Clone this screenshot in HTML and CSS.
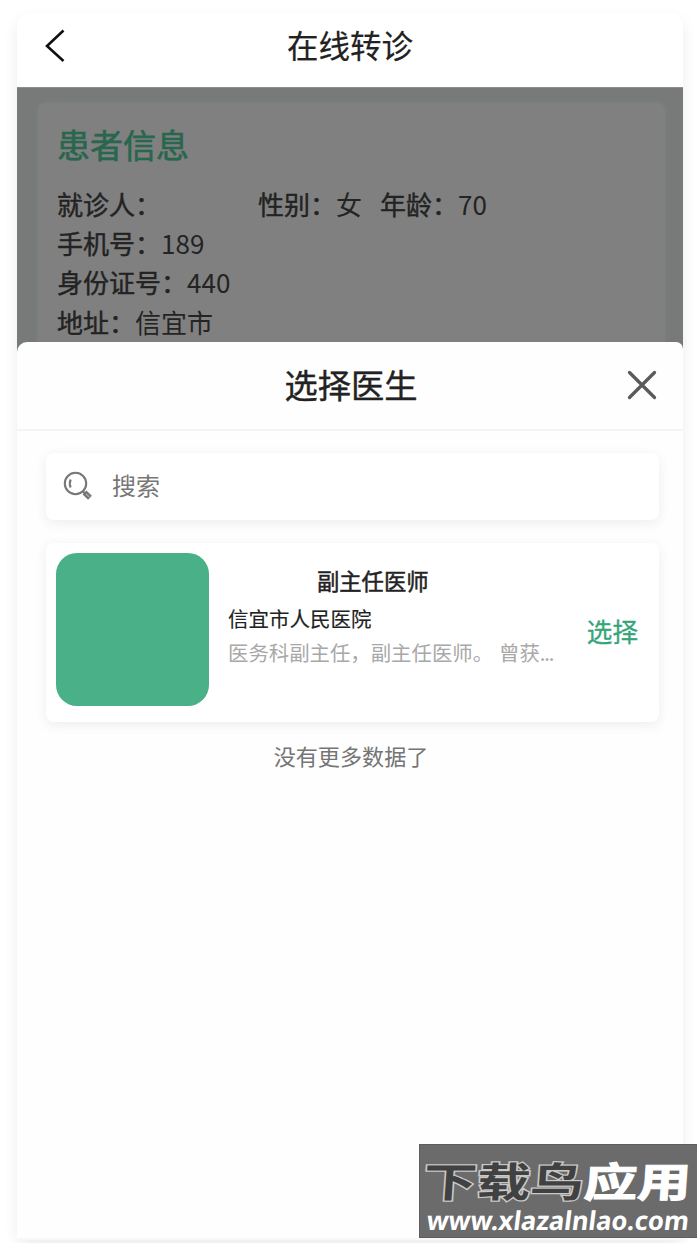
FILE: index.html
```html
<!DOCTYPE html>
<html lang="zh-CN">
<head>
<meta charset="utf-8">
<title>在线转诊</title>
<link rel="stylesheet" href="styles.css">
</head>
<body>
<div class="phone">
  <header class="navbar">
    <svg class="back" viewBox="0 0 22 34"><path d="M19.500 2.500 3 18 19.500 33"/></svg>
    <h1 class="nav-title">在线转诊</h1>
  </header>
  <section class="backdrop">
    <div class="patient">
      <h2 class="patient-title">患者信息</h2>
      <div class="row"><span class="name"><b>就诊人：</b></span><span class="gender"><b>性别：</b>女</span><span><b>年龄：</b>70</span></div>
      <div class="row"><b>手机号：</b>189</div>
      <div class="row"><b>身份证号：</b>440</div>
      <div class="row"><b>地址：</b>信宜市</div>
    </div>
  </section>
  <main class="sheet">
    <div class="sheet-head">
      <h2 class="sheet-title">选择医生</h2>
      <svg class="close" viewBox="0 0 30 30"><path d="M2.500 2.500 27.500 27.500M27.500 2.500 2.500 27.500"/></svg>
    </div>
    <div class="sheet-body">
      <div class="search">
        <svg class="lens" viewBox="0 0 30 30"><circle cx="12.500" cy="12.500" r="10.700"/><path d="M7.700 8.500Q5.800 12.500 7.700 16.500M20 20.500 22 22.500"/><path class="handle" d="M21.500 21.500 27 26.800"/><path class="handle-core" d="M23 23 26.300 26"/></svg>
        <span>搜索</span>
      </div>
      <article class="doctor">
        <div class="avatar"></div>
        <div class="info">
          <div class="rank">副主任医师</div>
          <div class="hospital">信宜市人民医院</div>
          <div class="desc"><span>医务科副主任，副主任医师。</span><span>曾获<span class="dots">...</span></span></div>
        </div>
        <div class="choose">选择</div>
      </article>
      <p class="nomore">没有更多数据了</p>
    </div>
  </main>
</div>
<aside class="watermark">
  <div class="brand"><span class="brand-dark">下载鸟</span><span class="brand-light">应用</span></div>
  <div class="site">www.xlazalnlao.com</div>
</aside>
</body>
</html>
```
FILE: styles.css
```css
* { box-sizing: border-box; }
body {
  margin: 0;
  height: 1243px;
  padding: 13px 17px 3px;
  overflow: hidden;
  background: #fff;
  font-family: "Noto Sans CJK SC", sans-serif;
  color: #222;
}
h1, h2, p { margin: 0; font-weight: 400; }
svg { display: block; fill: none; flex: none; }
.phone {
  width: 666px;
  height: 1227px;
  display: flex;
  flex-direction: column;
  border-radius: 14px;
  background: #fefefe;
  box-shadow: 0 6px 15px rgba(0, 0, 0, .08);
}
.navbar {
  height: 74px;
  display: grid;
  grid-template-columns: 60px 1fr 60px;
  align-items: center;
  padding-bottom: 8px;
  border-radius: 14px 14px 0 0;
  background: #fff;
}
.back { width: 22px; height: 34px; margin: -2px 0 0 27px; stroke: #111; stroke-width: 2.6; }
.nav-title { margin-top: -5px; font-size: 31.5px; line-height: 40px; text-align: center; -webkit-text-stroke: .2px #222; }
.backdrop {
  height: 269px;
  margin-bottom: -14px;
  padding: 15px 18px 0 21px;
  background: #777a79;
  border-top: 1px solid #8d8d8d;
}
.patient {
  height: 253px;
  padding: 18px 19px 0;
  border-radius: 8px 8px 0 0;
  background: #808080;
  box-shadow: 0 0 9px rgba(128, 132, 130, .6);
}
.patient-title { margin-bottom: 17px; font-size: 33px; line-height: 46px; color: #29664e; -webkit-text-stroke: .6px #29664e; }
.row { display: flex; font-size: 26px; line-height: 39.2px; color: #242424; }
.row b { font-weight: 400; -webkit-text-stroke: .4px #1c1c1c; }
.name { width: 201px; }
.gender { margin-right: 18px; }
.sheet {
  flex: 1;
  border-radius: 10px 7px 0 0;
  background: #fefefe;
  border-bottom: 2px solid #f8f8f8;
}
.sheet-head {
  height: 89px;
  display: grid;
  grid-template-columns: 74px 1fr 72px;
  align-items: center;
  border-bottom: 2px solid #f4f4f4;
}
.sheet-title { grid-column: 2; margin-top: -3px; font-size: 33.3px; line-height: 44px; text-align: center; -webkit-text-stroke: .4px #222; }
.close { width: 30px; height: 30px; margin: -2px 0 0 16px; stroke: #5a5a5a; stroke-width: 3.3; stroke-linecap: round; }
.sheet-body { padding: 22px 24px 0 29px; }
.search {
  height: 67px;
  display: flex;
  align-items: center;
  gap: 19px;
  padding: 0 0 3px 17px;
  border-radius: 8px;
  background: #fff;
  box-shadow: 0 3px 12px rgba(40, 70, 60, .09);
  font-size: 24px;
  line-height: 34px;
  color: #777;
}
.lens { width: 30px; height: 30px; margin-top: 2px; stroke: #777; stroke-width: 2.1; }
.lens .handle { stroke-width: 5.5; }
.lens .handle-core { stroke: #aaa; stroke-width: 1.2; }
.doctor {
  height: 179px;
  margin-top: 23px;
  display: flex;
  padding: 10px 21px 0 10px;
  border-radius: 8px;
  background: #fff;
  box-shadow: 0 3px 12px rgba(40, 70, 60, .09);
}
.avatar { width: 153px; height: 153px; border-radius: 21px; background: #49b087; }
.info { flex: 1; padding: 10px 0 0 19px; }
.rank { padding-left: 89px; font-size: 22.3px; line-height: 34px; -webkit-text-stroke: .5px #222; }
.hospital { margin-top: 4px; font-size: 20.5px; line-height: 34px; -webkit-text-stroke: .15px #222; }
.desc { display: flex; gap: 6px; font-size: 20.4px; line-height: 34px; color: #a8a8a8; white-space: nowrap; }
.dots { letter-spacing: -1.2px; }
.choose { padding-top: 60px; font-size: 25.6px; line-height: 36px; color: #35a579; -webkit-text-stroke: .3px #35a579; }
.nomore { margin-top: 16px; padding-right: 3px; font-size: 22.1px; line-height: 34px; text-align: center; color: #757575; }
.watermark {
  position: absolute;
  left: 419px;
  top: 1144px;
  width: 278px;
  height: 94px;
  background: #6b6b6b;
  border: 1px solid #5e5e5e;
  border-right: 0;
  color: #fff;
  white-space: nowrap;
  overflow: hidden;
}
.brand {
  display: flex;
  padding: 7px 0 0 4px;
  font-size: 53.5px;
  font-weight: 700;
  line-height: 56px;
  transform: scaleY(.76) skewX(-3deg);
}
.brand-dark { color: #414141; -webkit-text-stroke: 3.5px #c8c8c8; paint-order: stroke fill; }
.brand-light { -webkit-text-stroke: 1.4px #fff; }
.site {
  width: max-content;
  margin-top: -4px;
  padding-left: 7px;
  font: 700 26px/32px "Noto Sans", sans-serif;
  transform: skewX(-7deg) scaleX(.985);
  transform-origin: left center;
}
```
